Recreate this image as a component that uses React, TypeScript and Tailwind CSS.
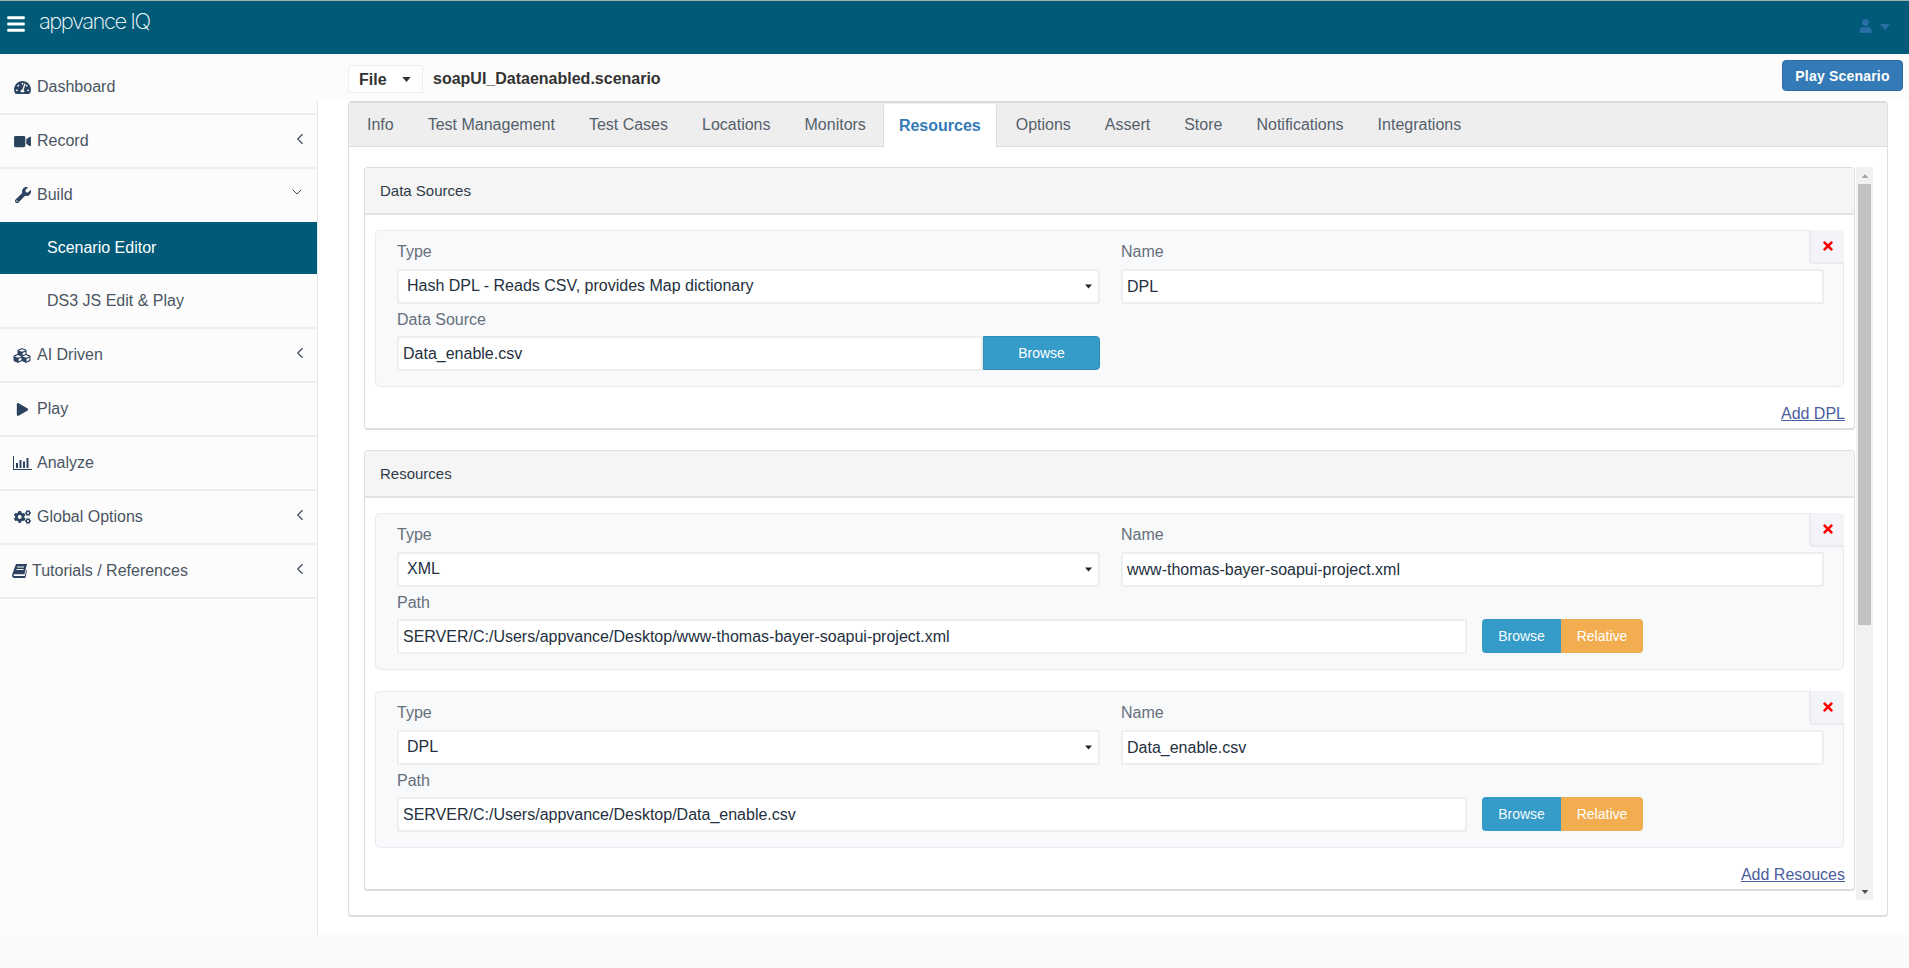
import React from "react";
import { FaBars, FaCogs, FaCubes, FaPlay, FaTachometerAlt, FaTimes, FaUser, FaVideo, FaWrench } from "react-icons/fa";
import { ChevronDown, ChevronLeft } from "lucide-react";

const arial = "font-['Liberation_Sans',Arial,sans-serif]";

function Caret({ className }: { className: string }) {
  return (
    <svg viewBox="0 0 10 6" className={className} fill="currentColor">
      <path d="M0 0h10L5 6z" />
    </svg>
  );
}

function BarChartIcon() {
  return (
    <svg viewBox="0 0 19 14" className="h-[14px] w-[19px]" fill="currentColor">
      <path d="M0 0h1v13h18v1H0z" />
      <rect x="3" y="7" width="2" height="5" />
      <rect x="6.500" y="4" width="2" height="8" />
      <rect x="10" y="5.500" width="2" height="6.500" />
      <rect x="13.500" y="2" width="2" height="10" />
    </svg>
  );
}

function BookIcon() {
  return (
    <svg viewBox="0 0 15 14" className="h-[14px] w-[15px]" fill="currentColor">
      <path d="M4 0h11l-2.600 10.300H2.300c-.9 0-1.100 1.700 0 1.700h10.400L14.300 6 15 6.500 13.300 14H2.300C.5 14-.4 12.300.2 10.500z" />
      <path d="M5.200 2.600h7l-.2 1H5zM4.600 5h7l-.2 1h-7z" fill="#fcfcfc" />
    </svg>
  );
}

function NavItem({ icon, label, chevron, textClass = "ml-[6px]", iconBox = "w-[17px]", noBorder, rowClass = "h-[54px]" }: { icon: React.ReactNode; label: string; chevron?: "left" | "down"; textClass?: string; iconBox?: string; noBorder?: boolean; rowClass?: string }) {
  return (
    <div className={`flex ${rowClass} shrink-0 items-center pl-[14px] text-[#4a5563] ${noBorder ? "" : "border-b-2 border-[#eeeeee]"}`}>
      <span className={`flex ${iconBox} shrink-0 items-center justify-center text-[#2c4360]`}>{icon}</span>
      <span className={`${textClass} text-base leading-[22px]`}>{label}</span>
      {chevron === "left" && <ChevronLeft size={18} strokeWidth={1.5} className="ml-auto mr-[8px] -mt-[4px] text-[#3b4a5c]" />}
      {chevron === "down" && <ChevronDown size={16} strokeWidth={1.5} className="ml-auto mr-[12px] -mt-[6px] text-[#3b4a5c]" />}
    </div>
  );
}

function Tab({ label, active }: { label: string; active?: boolean }) {
  if (active) {
    return (
      <div className="relative -mb-px mr-[2px] mt-px flex h-[44px] items-center rounded-t-[3px] border-x border-[#dddddd] bg-white px-[15px] text-base font-bold text-[#337ab7]">
        {label}
      </div>
    );
  }
  return <div className="flex h-[44px] items-center px-[17px] text-base text-[#555f6b]">{label}</div>;
}

function Field({ label, children }: { label: string; children: React.ReactNode }) {
  return (
    <div className="min-w-0">
      <div className="mb-[6px] h-[22px] text-base leading-[22px] text-[#666f7a]">{label}</div>
      {children}
    </div>
  );
}

function SelectBox({ value }: { value: string }) {
  return (
    <div className="flex h-[35px] items-center rounded-[2px] border-2 border-[#eeeeee] bg-white pl-[8px] pr-[6px] text-base text-[#243040]">
      <span className="pb-px">{value}</span>
      <Caret className="ml-auto h-[5px] w-[7px] text-[#222222]" />
    </div>
  );
}

function InputBox({ value, className = "" }: { value: string; className?: string }) {
  return (
    <div className={`flex h-[35px] items-center rounded-[2px] border-2 border-[#eeeeee] bg-white pl-[4px] text-base text-[#243040] ${className}`}>
      {value}
    </div>
  );
}

function Card({ type, name, pathLabel, path, single }: { type: string; name: string; pathLabel: string; path: string; single?: boolean }) {
  return (
    <div className="relative mx-[10px] h-[157px] rounded-[5px] border border-[#e9ebef] bg-[#f8f9fb] pl-[21px] pr-[21px] pt-[10px]">
      <div className="absolute right-[-1px] top-[-1px] flex h-[34px] w-[35px] items-center justify-center rounded-bl-[4px] rounded-tr-[5px] border-b-2 border-l-2 border-[#e9ebef] bg-[#f3f4f7]">
        <FaTimes className="h-[14px] w-[10px] text-[#ff0000]" />
      </div>
      <div className="grid grid-cols-[703px_703px] gap-x-[21px]">
        <Field label="Type">
          <SelectBox value={type} />
        </Field>
        <Field label="Name">
          <InputBox value={name} />
        </Field>
      </div>
      <div className="mt-[5px] h-[27px] text-base leading-[22px] text-[#666f7a]">{pathLabel}</div>
      {single ? (
        <div className="flex w-[703px]">
          <InputBox value={path} className="w-[586px] rounded-r-none" />
          <div className="flex h-[34px] flex-1 items-center justify-center rounded-r-[4px] border border-[#2f8ab5] bg-[#359bc8] text-sm text-white">Browse</div>
        </div>
      ) : (
        <div className="flex items-start">
          <InputBox value={path} className="w-[1070px]" />
          <div className="ml-[15px] flex h-[34px]">
            <div className="flex w-[79px] items-center justify-center rounded-l-[4px] bg-[#359bc8] text-sm text-[#f4fafd]">Browse</div>
            <div className="flex w-[82px] items-center justify-center rounded-r-[4px] bg-[#f2ad50] text-sm text-white">Relative</div>
          </div>
        </div>
      )}
    </div>
  );
}

function Section({ title, link, children }: { title: string; link: string; children: React.ReactNode }) {
  return (
    <div className="rounded-[4px] border border-b-2 border-[#dddddd] bg-white">
      <div className="flex h-[47px] items-center rounded-t-[4px] border-b-2 border-[#e3e3e3] bg-[#f5f5f5] pl-[15px] pt-px text-[15px] text-[#2f3a48]">{title}</div>
      <div className="flex flex-col gap-[21px] pt-[15px]">{children}</div>
      <div className="mr-[9px] mt-[16px] flex h-[22px] justify-end text-base leading-[22px] text-[#4a5d9e] underline">{link}</div>
      <div className="h-[3px]" />
    </div>
  );
}

export default function App() {
  return (
    <div className={`flex h-[968px] w-full flex-col overflow-hidden bg-[#fafafa] ${arial}`}>
      <header className="flex h-[54px] shrink-0 border-t border-[#a9aeb1] bg-[#015a78]">
        <FaBars className="ml-[7px] mt-[13px] h-[20px] w-[18px] text-white" />
        <div className="ml-[14px] mt-[5px] font-['Inter',sans-serif] text-[22px] font-extralight leading-[30px] tracking-[-1.5px] text-white">appvance IQ</div>
        <div className="ml-auto mr-[19px] mt-[18px] flex items-start">
          <FaUser className="h-[14px] w-[13px] text-[#2a6ea6]" />
          <Caret className="ml-[8px] mt-[5px] h-[6px] w-[10px] text-[#2a6ea6]" />
        </div>
      </header>
      <div className="flex h-[881px] shrink-0 bg-[#fcfcfc]">
        <aside className="flex w-[317px] shrink-0 flex-col">
          <div className="h-[7px] shrink-0" />
          <NavItem icon={<FaTachometerAlt className="h-[15px] w-[17px]" />} label="Dashboard" />
          <NavItem icon={<FaVideo className="h-[15px] w-[17px]" />} label="Record" chevron="left" />
          <NavItem icon={<FaWrench className="h-[16px] w-[16px]" />} label="Build" chevron="down" noBorder rowClass="h-[53px] pb-px" />
          <div className="flex h-[52px] shrink-0 items-center bg-[#015a78] pl-[47px] text-base text-white">Scenario Editor</div>
          <div className="flex h-[55px] shrink-0 items-center border-b-2 border-[#eeeeee] pl-[47px] text-base text-[#4a5563]">DS3 JS Edit &amp; Play</div>
          <NavItem icon={<FaCubes className="h-[17px] w-[20px]" />} label="AI Driven" chevron="left" textClass="ml-[5px]" iconBox="-ml-[2px] w-[20px]" />
          <NavItem icon={<FaPlay className="h-[13px] w-[13px]" />} label="Play" />
          <NavItem icon={<BarChartIcon />} label="Analyze" textClass="ml-[5px]" iconBox="-ml-[1px] w-[19px]" />
          <NavItem icon={<FaCogs className="h-[16px] w-[18px]" />} label="Global Options" chevron="left" />
          <NavItem icon={<BookIcon />} label="Tutorials / References" chevron="left" textClass="ml-[5px]" iconBox="-ml-[2px] w-[15px]" />
        </aside>
        <main className="flex min-w-0 flex-1 flex-col">
          <div className="flex h-[47px] shrink-0 items-start">
            <div className="ml-[31px] mt-[11px] flex h-[28px] w-[75px] items-center rounded-[2px] border border-[#eeeeee] bg-white pl-[10px] text-base font-bold text-[#333333]">
              <span className="pt-[2px]">File</span>
              <Caret className="ml-[15px] h-[5px] w-[9px] text-[#333333]" />
            </div>
            <div className="ml-[10px] mt-[11px] text-base font-bold leading-[27px] text-[#333333]">soapUI_Dataenabled.scenario</div>
            <div className="ml-auto mr-[6px] mt-[6px] flex h-[31px] w-[121px] items-center justify-center rounded-[4px] border border-[#2e6da4] bg-[#337ab7] text-sm font-bold tracking-[0.2px] text-white">Play Scenario</div>
          </div>
          <div className="flex-1 border-l border-[#e7e7e7] bg-white pl-[30px] pr-[21px]">
            <div className="h-[816px] rounded-[4px] border border-t-2 border-b-2 border-[#dddddd] bg-white">
              <div className="flex h-[44px] border-b border-[#dddddd] bg-[#eeeeee] pl-px">
                {["Info", "Test Management", "Test Cases", "Locations", "Monitors"].map((t) => (
                  <Tab key={t} label={t} />
                ))}
                <Tab label="Resources" active />
                {["Options", "Assert", "Store", "Notifications", "Integrations"].map((t) => (
                  <Tab key={t} label={t} />
                ))}
              </div>
              <div className="flex pl-[15px] pt-[20px]">
                <div className="flex min-w-0 flex-1 flex-col gap-[20px]">
                  <Section title="Data Sources" link="Add DPL">
                    <Card type="Hash DPL - Reads CSV, provides Map dictionary" name="DPL" pathLabel="Data Source" path="Data_enable.csv" single />
                  </Section>
                  <Section title="Resources" link="Add Resouces">
                    <Card type="XML" name="www-thomas-bayer-soapui-project.xml" pathLabel="Path" path="SERVER/C:/Users/appvance/Desktop/www-thomas-bayer-soapui-project.xml" />
                    <Card type="DPL" name="Data_enable.csv" pathLabel="Path" path="SERVER/C:/Users/appvance/Desktop/Data_enable.csv" />
                  </Section>
                </div>
                <div className="ml-px mr-[14px] flex h-[733px] w-[17px] shrink-0 flex-col items-center bg-[#f1f1f1]">
                  <div className="flex h-[17px] shrink-0 items-center justify-center">
                    <Caret className="h-[4px] w-[8px] rotate-180 text-[#a3a3a3]" />
                  </div>
                  <div className="h-[441px] w-[13px] shrink-0 bg-[#c1c1c1]" />
                  <div className="mt-auto flex h-[17px] shrink-0 items-center justify-center">
                    <Caret className="h-[4px] w-[8px] text-[#505050]" />
                  </div>
                </div>
              </div>
            </div>
          </div>
        </main>
      </div>
    </div>
  );
}
